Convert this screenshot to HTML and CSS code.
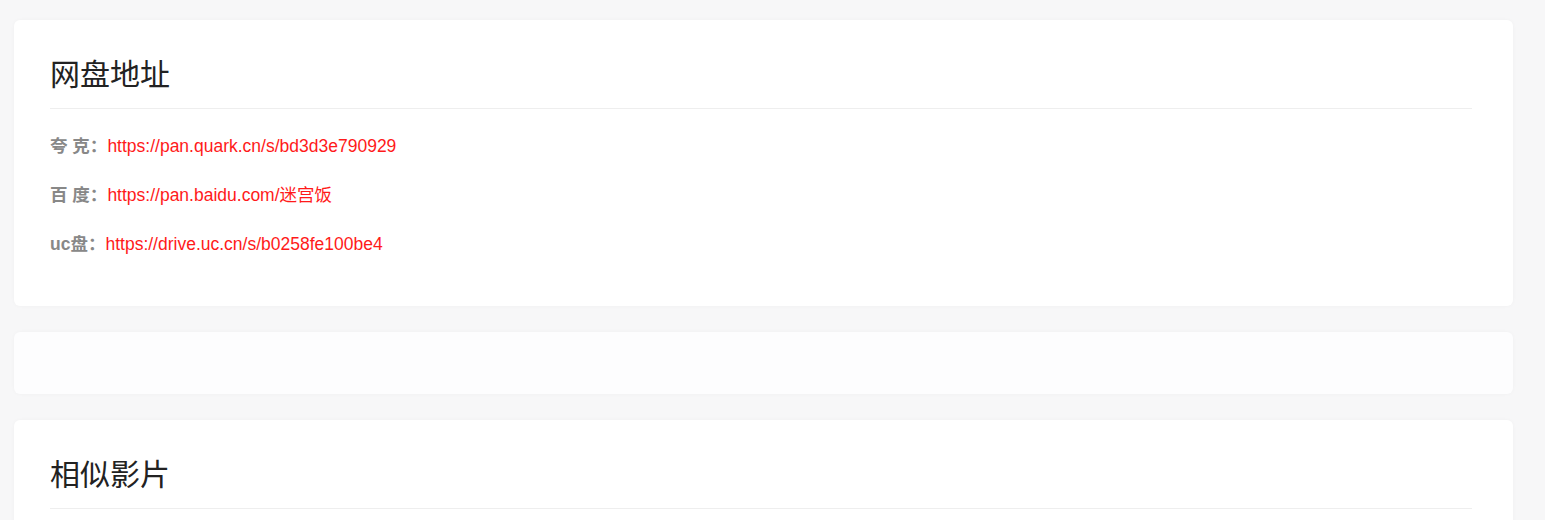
FILE: index.html
```html
<!DOCTYPE html>
<html lang="zh-CN">
<head>
<meta charset="utf-8">
<title>网盘地址</title>
<link rel="stylesheet" href="styles.css">
</head>
<body>
<div class="page">
  <section class="card">
    <h2 class="card-title">网盘地址</h2>
    <div class="links">
      <p class="link-row"><span class="label">夸 克：</span><a class="url" href="#">https://pan.quark.cn/s/bd3d3e790929</a></p>
      <p class="link-row"><span class="label">百 度：</span><a class="url" href="#">https://pan.baidu.com/迷宫饭</a></p>
      <p class="link-row"><span class="label">uc盘：</span><a class="url" href="#">https://drive.uc.cn/s/b0258fe100be4</a></p>
    </div>
  </section>
  <section class="card card-empty"></section>
  <section class="card">
    <h2 class="card-title">相似影片</h2>
  </section>
</div>
</body>
</html>
```
FILE: styles.css
```css
html, body {
  margin: 0;
  padding: 0;
  background: #f7f7f8;
  font-family: "Liberation Sans", "Noto Sans CJK SC", sans-serif;
}
.page {
  display: flex;
  flex-direction: column;
  gap: 26px;
  padding: 20px 32px 0 14px;
}
.card {
  background: #fff;
  border-radius: 6px;
  box-shadow: 0 0 4px rgba(0,0,0,0.03);
  padding: 30px 41px 50px 36px;
}
.card-empty {
  height: 62px;
  padding: 0;
  box-sizing: border-box;
  background: #fdfdfe;
}
.card-title {
  margin: 0;
  font-family: "Noto Sans CJK SC", sans-serif;
  font-weight: 400;
  font-size: 30px;
  line-height: 45px;
  color: #222;
  padding-bottom: 13px;
  border-bottom: 1px solid #eeeeee;
}
.links {
  display: flex;
  flex-direction: column;
  gap: 25px;
  padding-top: 25px;
}
.link-row {
  margin: 0;
  font-size: 17.5px;
  line-height: 24px;
}
.label {
  font-weight: bold;
  color: #888;
}
.url {
  color: #ff1a1a;
  text-decoration: none;
}
```
